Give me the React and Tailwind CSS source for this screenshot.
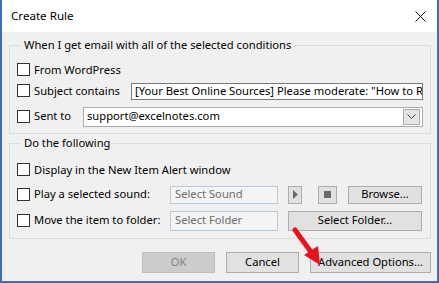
const font = { fontFamily: '"Noto Sans", "Liberation Sans", sans-serif' };

const Check = () => (
  <span className="inline-block w-[13px] h-[13px] shrink-0 border border-[#333333] bg-white" />
);

const CheckLabel = ({ children, className = '' }) => (
  <div className={`flex items-center gap-[4px] ${className}`}>
    <Check />
    <span className="whitespace-nowrap">{children}</span>
  </div>
);

const Button = ({ children, className = '', disabled = false }) => (
  <div
    className={`flex items-center justify-center border ${
      disabled
        ? 'bg-[#cccccc] border-[#bfbfbf] text-[#838383]'
        : 'bg-[#e1e1e1] border-[#adadad] text-black'
    } ${className}`}
  >
    {children}
  </div>
);

const DisabledInput = ({ children, className = '' }) => (
  <div
    className={`flex items-center px-[4px] border border-[#b9c9dc] bg-[#f4f4f4] text-[#6d6d6d] whitespace-nowrap overflow-hidden ${className}`}
  >
    {children}
  </div>
);

const Group = ({ title, children, className = '' }) => (
  <fieldset className={`border border-[#dcdcdc] pl-[7px] pr-[7px] ${className}`}>
    <legend className="ml-[4px] px-[3px] h-[16px] leading-[16px] whitespace-nowrap">{title}</legend>
    {children}
  </fieldset>
);

export default function App() {
  return (
    <div
      className="relative w-[439px] h-[283px] overflow-hidden flex flex-col border-x-2 border-b-2 border-[#3e6dba] bg-[#f0f0f0] text-[11.2px] text-black"
      style={font}
    >
      {/* Title bar */}
      <div className="h-[32px] shrink-0 bg-white flex items-center justify-between pl-[9px] pr-[10px] text-[11.6px]">
        <span>Create Rule</span>
        <svg width="11" height="11" viewBox="0 0 11 11" className="mr-[1px]">
          <path d="M0.5 0.5 L10.5 10.5 M10.5 0.5 L0.5 10.5" stroke="#111" strokeWidth="1" />
        </svg>
      </div>

      {/* Body */}
      <div className="flex flex-col pl-[7px] pr-[6px] pt-[5px]">
        <Group title="When I get email with all of the selected conditions" className="pb-[6px]">
          <div className="h-[20px] mt-[7px] flex items-center">
            <CheckLabel>From WordPress</CheckLabel>
          </div>
          <div className="h-[20px] mt-[1px] flex items-center">
            <CheckLabel className="w-[114px]">Subject contains</CheckLabel>
            <div className="w-[292px] h-[17px] flex items-center px-[3px] border border-[#7a7a7a] bg-white whitespace-nowrap overflow-hidden">
              [Your Best Online Sources] Please moderate: "How to Ro
            </div>
          </div>
          <div className="h-[21px] mt-[5px] flex items-center">
            <CheckLabel className="w-[66px]">Sent to</CheckLabel>
            <div className="w-[340px] h-[20px] flex items-center justify-between pl-[3px] pr-[2px] border border-[#adadad] bg-white">
              <span>support@excelnotes.com</span>
              <div className="w-[17px] h-[16px] flex items-center justify-center border border-[#acacac] bg-[#e5e5e5]">
                <svg width="9" height="5" viewBox="0 0 9 5">
                  <path d="M0.5 0.5 L4.5 4.5 L8.5 0.5" fill="none" stroke="#444" strokeWidth="1" />
                </svg>
              </div>
            </div>
          </div>
        </Group>

        <Group title="Do the following" className="mt-[1px] pb-[7px]">
          <div className="h-[20px] mt-[9px] flex items-center">
            <CheckLabel>Display in the New Item Alert window</CheckLabel>
          </div>
          <div className="h-[19px] mt-[5px] flex items-center">
            <CheckLabel className="w-[153px]">Play a selected sound:</CheckLabel>
            <DisabledInput className="w-[108px] h-[18px]">Select Sound</DisabledInput>
            <Button className="ml-[10px] w-[14px] h-[18px]">
              <svg width="5" height="9" viewBox="0 0 5 9">
                <path d="M0 0 L5 4.5 L0 9 Z" fill="#6a6a6a" />
              </svg>
            </Button>
            <Button className="ml-[16px] w-[19px] h-[18px]">
              <span className="w-[7px] h-[7px] bg-[#6a6a6a]" />
            </Button>
            <Button className="ml-[11px] w-[74px] h-[18px]">Browse...</Button>
          </div>
          <div className="h-[21px] mt-[6px] flex items-center">
            <CheckLabel className="w-[153px]">Move the item to folder:</CheckLabel>
            <DisabledInput className="w-[108px] h-[20px]">Select Folder</DisabledInput>
            <Button className="ml-[10px] w-[134px] h-[20px]">Select Folder...</Button>
          </div>
        </Group>

        <div className="mt-[13px] flex justify-end gap-[11px]">
          <Button disabled className="w-[73px] h-[21px]">OK</Button>
          <Button className="w-[73px] h-[21px]">Cancel</Button>
          <Button className="w-[121px] h-[21px]">Advanced Options...</Button>
        </div>
      </div>

      {/* Annotation arrow */}
      <svg className="absolute left-0 top-0 pointer-events-none" width="439" height="283" viewBox="0 0 439 283">
        <path d="M293 230 L309 252" stroke="#e8141b" strokeWidth="5" strokeLinecap="round" />
        <path d="M318 265 L302 255 L316 246 Z" fill="#e8141b" />
      </svg>
    </div>
  );
}
